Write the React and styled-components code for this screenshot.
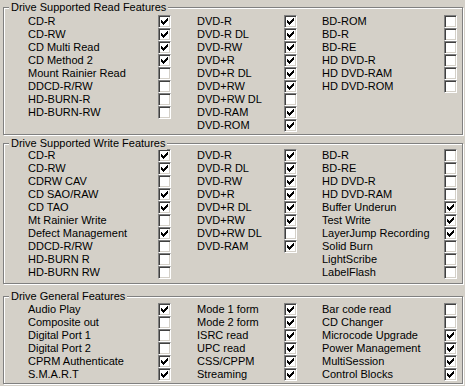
import React from "react";
import styled, { createGlobalStyle } from "styled-components";

const GlobalStyle = createGlobalStyle`
  html, body {
    margin: 0;
    padding: 0;
    background: #d4d0c8;
  }
  body {
    font-family: "Liberation Sans", Arial, sans-serif;
    font-size: 11px;
    color: #000;
  }
`;

const Page = styled.div`
  width: 465px;
  height: 386px;
  background: #d4d0c8;
  padding: 7px 2px 0 3px;
  box-sizing: border-box;
  display: flex;
  flex-direction: column;
`;

const Group = styled.div`
  position: relative;
  margin-top: ${(p) => p.$mt}px;
  padding: ${(p) => p.$pt}px 0 ${(p) => p.$pb}px 24px;
  border: 1px solid #808080;
  box-shadow: inset 1px 1px 0 #fff, 1px 1px 0 #fff;
`;

const Legend = styled.span`
  position: absolute;
  top: -7px;
  left: 5px;
  padding: 0 2px;
  line-height: 13px;
  background: #d4d0c8;
  white-space: nowrap;
`;

const Body = styled.div`
  display: flex;
  flex-direction: row;
  align-items: flex-start;
`;

const Column = styled.div`
  display: flex;
  flex-direction: column;
  width: ${(p) => p.$w}px;
  margin-right: ${(p) => p.$gap || 0}px;
`;

const Row = styled.div`
  display: flex;
  justify-content: space-between;
  align-items: center;
  height: 13px;
  line-height: 13px;
  white-space: nowrap;
`;

const Box = styled.span`
  display: flex;
  align-items: center;
  justify-content: center;
  width: 13px;
  height: 13px;
  box-sizing: border-box;
  background: #fff;
  border: 1px solid;
  border-color: #808080 #fff #fff #808080;
  box-shadow: inset 1px 1px 0 #404040, inset -1px -1px 0 #d4d0c8;
  svg {
    display: block;
  }
`;

const CHECK = [
  [6, 0], [5, 1], [6, 1], [0, 2], [4, 2], [5, 2], [6, 2],
  [0, 3], [1, 3], [3, 3], [4, 3], [5, 3],
  [0, 4], [1, 4], [2, 4], [3, 4], [4, 4],
  [1, 5], [2, 5], [3, 5], [2, 6],
];

const CheckBox = ({ on }) => (
  <Box>
    {on && (
      <svg width="7" height="7" viewBox="0 0 7 7" shapeRendering="crispEdges">
        {CHECK.map(([x, y]) => (
          <rect key={`${x}-${y}`} x={x} y={y} width="1" height="1" fill="#000" />
        ))}
      </svg>
    )}
  </Box>
);

const WIDTHS = [143, 100, 135];
const GAPS = [26, 25, 0];

const groups = [
  {
    title: "Drive Supported Read Features",
    mt: 0,
    pt: 7,
    pb: 2,
    cols: [
      [
        ["CD-R", 1], ["CD-RW", 1], ["CD Multi Read", 1], ["CD Method 2", 1],
        ["Mount Rainier Read", 0], ["DDCD-R/RW", 0], ["HD-BURN-R", 0], ["HD-BURN-RW", 0],
      ],
      [
        ["DVD-R", 1], ["DVD-R DL", 1], ["DVD-RW", 1], ["DVD+R", 1], ["DVD+R DL", 1],
        ["DVD+RW", 1], ["DVD+RW DL", 0], ["DVD-RAM", 1], ["DVD-ROM", 1],
      ],
      [
        ["BD-ROM", 0], ["BD-R", 0], ["BD-RE", 0], ["HD DVD-R", 0],
        ["HD DVD-RAM", 0], ["HD DVD-ROM", 0],
      ],
    ],
  },
  {
    title: "Drive Supported Write Features",
    mt: 8,
    pt: 5,
    pb: 4,
    cols: [
      [
        ["CD-R", 1], ["CD-RW", 1], ["CDRW CAV", 0], ["CD SAO/RAW", 1], ["CD TAO", 1],
        ["Mt Rainier Write", 0], ["Defect Management", 1], ["DDCD-R/RW", 0],
        ["HD-BURN R", 0], ["HD-BURN RW", 0],
      ],
      [
        ["DVD-R", 1], ["DVD-R DL", 1], ["DVD-RW", 1], ["DVD+R", 1], ["DVD+R DL", 1],
        ["DVD+RW", 1], ["DVD+RW DL", 0], ["DVD-RAM", 1],
      ],
      [
        ["BD-R", 0], ["BD-RE", 0], ["HD DVD-R", 0], ["HD DVD-RAM", 0],
        ["Buffer Underun", 1], ["Test Write", 1], ["LayerJump Recording", 1],
        ["Solid Burn", 0], ["LightScribe", 0], ["LabelFlash", 0],
      ],
    ],
  },
  {
    title: "Drive General Features",
    mt: 12,
    pt: 6,
    pb: 2,
    cols: [
      [
        ["Audio Play", 1], ["Composite out", 0], ["Digital Port 1", 0],
        ["Digital Port 2", 0], ["CPRM Authenticate", 1], ["S.M.A.R.T", 1],
      ],
      [
        ["Mode 1 form", 1], ["Mode 2 form", 1], ["ISRC read", 1],
        ["UPC read", 1], ["CSS/CPPM", 1], ["Streaming", 1],
      ],
      [
        ["Bar code read", 0], ["CD Changer", 0], ["Microcode Upgrade", 1],
        ["Power Management", 1], ["MultiSession", 1], ["Control Blocks", 1],
      ],
    ],
  },
];

const App = () => (
  <>
    <GlobalStyle />
    <Page>
      {groups.map((g) => (
        <Group key={g.title} $mt={g.mt} $pt={g.pt} $pb={g.pb}>
          <Legend>{g.title}</Legend>
          <Body>
            {g.cols.map((col, i) => (
              <Column key={i} $w={WIDTHS[i]} $gap={GAPS[i]}>
                {col.map(([label, on]) => (
                  <Row key={label}>
                    <span>{label}</span>
                    <CheckBox on={!!on} />
                  </Row>
                ))}
              </Column>
            ))}
          </Body>
        </Group>
      ))}
    </Page>
  </>
);

export default App;
